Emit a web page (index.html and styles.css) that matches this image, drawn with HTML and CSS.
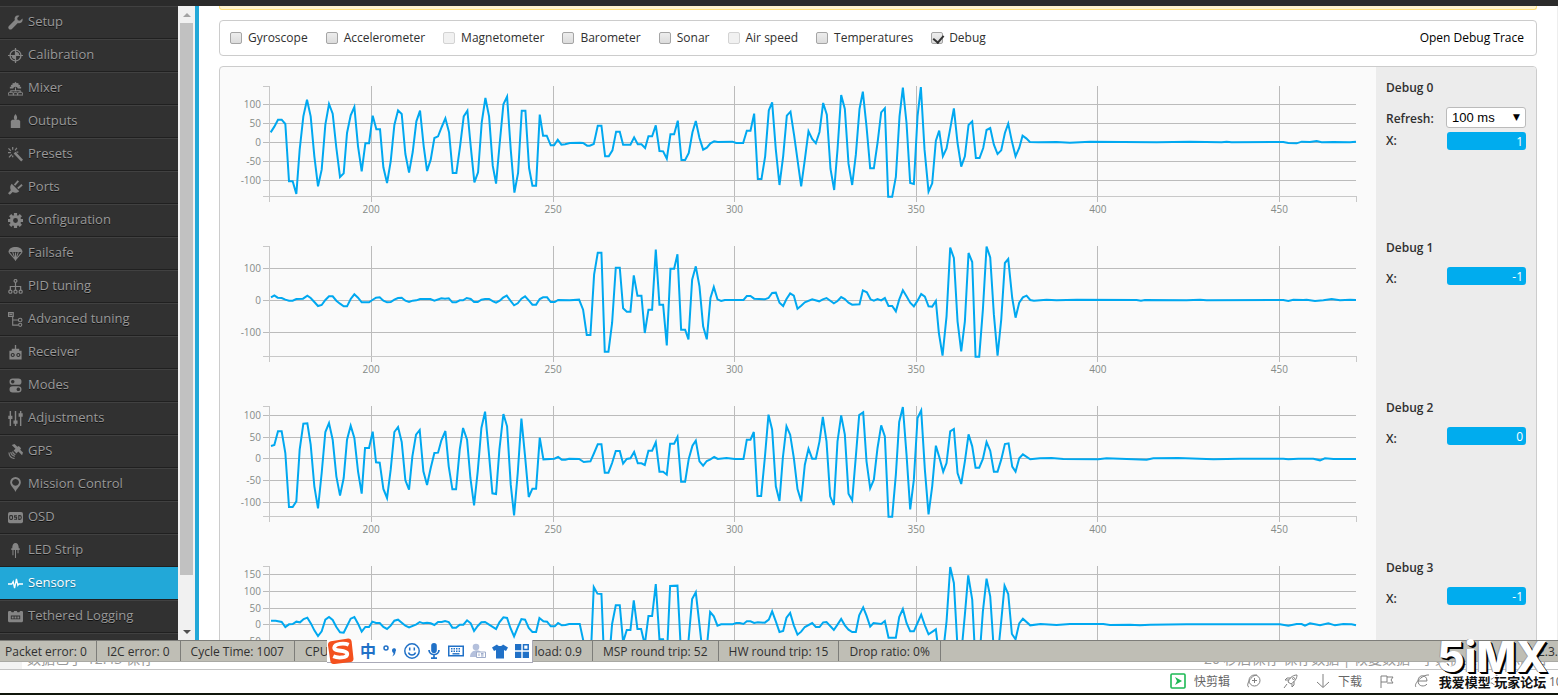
FILE: index.html
```html
<!DOCTYPE html>
<html lang="en">
<head>
<meta charset="utf-8">
<title>Configurator - Sensors</title>
<link rel="stylesheet" href="styles.css">
</head>
<body>
<svg class="sprite" aria-hidden="true">
  <symbol id="i-wrench" viewBox="0 0 16 16"><path d="M15.400 3.600 12.800 6l-2.400-.5L9.800 3.200 12.200.7C10.400.1 8.500.5 7.600 2c-.7 1.100-.7 2.200-.3 3.300L1 11.600c-1 1-.9 2.400 0 3.200.9.900 2.300.9 3.200 0l6.300-6.200c1.300.5 2.700.3 3.700-.6 1.300-1.200 1.700-2.900 1.200-4.400z"/></symbol>
  <symbol id="i-target" viewBox="0 0 16 16"><circle cx="8" cy="8" r="5.800" fill="none" stroke="currentColor" stroke-width="1.400"/><path d="M8 0v16M0 8h16" stroke="currentColor" stroke-width="1.300"/><path d="M8 8V4a4 4 0 0 1 4 4zM8 8v4a4 4 0 0 1-4-4z"/></symbol>
  <symbol id="i-mixer" viewBox="0 0 16 16"><path d="M2 6h1.500L3 4.300l1.700-.4.300-1.900 1.700.4L8 .8l1.300 1.600 1.700-.4.300 1.900 1.700.4L12.500 6H14v2h-3.500a2.600 2.600 0 0 0-5 0H2z"/><path d="M8 7v4M3 12.500V10.500h10v2" fill="none" stroke="currentColor" stroke-width="1.100"/><path d="M1 12h4l1 3H0zm5.500 0h3l1 3h-5zM11 12h4l1 3h-6z" fill="none" stroke="currentColor" stroke-width="1"/></symbol>
  <symbol id="i-output" viewBox="0 0 16 16"><path d="M8 0c1.500 2 1.800 3 1.700 4.500L9 6h2.500L13 7.500V15H3V7.500L4.500 6H7l-.7-1.500C6.200 3 6.500 2 8 0z"/></symbol>
  <symbol id="i-wand" viewBox="0 0 16 16"><path d="m6 7 2-2 8 8.500-2 2z"/><path d="M5 0v3M.5 1.500l2.500 2.500M9.500 1 7.500 3.500M0 6h3M1 11l3-3M9 5.500h2M5 9v2" stroke="currentColor" stroke-width="1.300"/></symbol>
  <symbol id="i-plug" viewBox="0 0 16 16"><path d="m4 4 8 8c-2.500 2-5 2-7 .8L2 15.800 0 14l3-3C2 8.500 2 6 4 4z"/><path d="m7 5.500 4-4.500M10.500 9 15 5" stroke="currentColor" stroke-width="2"/></symbol>
  <symbol id="i-gear" viewBox="0 0 16 16"><circle cx="8" cy="8" r="4.300" fill="none" stroke="currentColor" stroke-width="3.400"/><path d="M8 0v3M8 13v3M0 8h3M13 8h3M2.300 2.300l2 2M11.700 11.700l2 2M13.700 2.300l-2 2M4.300 11.700l-2 2" stroke="currentColor" stroke-width="3.400"/></symbol>
  <symbol id="i-chute" viewBox="0 0 16 16"><path d="M.5 6.500c0-3.500 3.500-5.500 7.500-5.500s7.500 2 7.500 5.500z"/><path d="M1 6.500 8 15l7-8.500M5 6.500 8 15l3-8.500M8 7v8" fill="none" stroke="currentColor" stroke-width="1.100"/></symbol>
  <symbol id="i-tree" viewBox="0 0 16 16"><g fill="none" stroke="currentColor" stroke-width="1.300"><circle cx="8" cy="2" r="1.500"/><path d="M8 3.500V12M2.500 12V8h11v4"/><circle cx="2.500" cy="13.500" r="1.700"/><circle cx="8" cy="13.500" r="1.700"/><circle cx="13.500" cy="13.500" r="1.700"/></g></symbol>
  <symbol id="i-branch" viewBox="0 0 16 16"><g fill="none" stroke="currentColor" stroke-width="1.200"><path d="M.6.600h5v4h-5zM1.500 2.500h3M5 5v9h6M5 8.500h6"/><circle cx="13" cy="8.500" r="1.900"/><circle cx="13" cy="13.700" r="1.700"/></g></symbol>
  <symbol id="i-radio" viewBox="0 0 16 16"><path fill-rule="evenodd" d="M7.300 0h1.400v4H12v2h2.500v9.500h-13V6H4V4h3.300zM5 8.500a2.200 2.200 0 1 0 .1 0zM11 8.500a2.200 2.200 0 1 0 .1 0z"/><circle cx="5" cy="10.700" r="1"/><circle cx="11" cy="10.700" r="1"/></symbol>
  <symbol id="i-modes" viewBox="0 0 16 16"><path fill-rule="evenodd" d="M5 .5h6a3.400 3.400 0 0 1 0 6.800H5A3.400 3.400 0 0 1 5 .500zM5 2a1.900 1.900 0 1 0 .1 0zM5 8.700h6a3.400 3.400 0 0 1 0 6.800H5a3.400 3.400 0 0 1 0-6.800zm6 1.500a1.900 1.900 0 1 0 .1 0z"/></symbol>
  <symbol id="i-sliders" viewBox="0 0 16 16"><path d="M2.500 0v16M8 0v16M13.500 0v16" stroke="currentColor" stroke-width="1.500"/><path d="M.3 5h4.400v3.500H.300zM5.800 10h4.400v3.500H5.800zM11.300 2.500h4.400V6h-4.400z"/></symbol>
  <symbol id="i-sat" viewBox="0 0 16 16"><path d="m4 1 3-1 3 3 1.500-1L14 4.500 13 6l3 3-1 3-4-4-2 2-3-3 2-2z"/><path d="M5 8a3 3 0 0 0 3 3M3 8.500A5 5 0 0 0 7.500 13M1 9a7 7 0 0 0 6 6.500" fill="none" stroke="currentColor" stroke-width="1.200"/></symbol>
  <symbol id="i-pin" viewBox="0 0 16 16"><path fill-rule="evenodd" d="M8 0a5.700 5.700 0 0 1 5.700 5.700C13.700 9.500 9.500 12 8 16 6.500 12 2.300 9.500 2.300 5.700A5.700 5.700 0 0 1 8 0zm0 2a3.700 3.700 0 1 0 .1 0z"/></symbol>
  <symbol id="i-osd" viewBox="0 0 16 16"><rect y="2" width="16" height="12" rx="2"/><g fill="none" stroke="#303030" stroke-width="1.100"><rect x="1.800" y="6" width="3" height="4" rx="1"/><path d="M9.500 6.200H7v1.600h2.200v2H6.500M11.500 6v4h1.200q1.500 0 1.500-2t-1.500-2z"/></g></symbol>
  <symbol id="i-led" viewBox="0 0 16 16"><path d="M4.500 5.500C4.500 2 6 0 8 0s3.500 2 3.500 5.500h1v2h-9v-2z"/><path d="M5.300 7v6M8 7v9M10.700 7v4" stroke="currentColor" stroke-width="1.100"/></symbol>
  <symbol id="i-pulse" viewBox="0 0 16 16"><path d="M0 8.500h4L5.500 6 7 13 9 3l1.500 7 1-1.500H16" fill="none" stroke="currentColor" stroke-width="1.400"/></symbol>
  <symbol id="i-log" viewBox="0 0 16 16"><path fill-rule="evenodd" d="M1 2h2l1 1.500h2L6.500 2h3l.5 1.500h2L13 2h2l1 1v10l-1 1H1l-1-1V3zm2 5v4h10V7z"/><path d="M4 8h2v2H4zm3 0h2v2H7zm3 0h2v2h-2z"/></symbol>
</svg>

<div class="titlebar"></div>
<div class="app">
  <nav class="sidebar">
    <ul class="menu">
      <li><a href="#setup"><svg><use href="#i-wrench"/></svg>Setup</a></li>
      <li><a href="#calibration"><svg><use href="#i-target"/></svg>Calibration</a></li>
      <li><a href="#mixer"><svg><use href="#i-mixer"/></svg>Mixer</a></li>
      <li><a href="#outputs"><svg><use href="#i-output"/></svg>Outputs</a></li>
      <li><a href="#presets"><svg><use href="#i-wand"/></svg>Presets</a></li>
      <li><a href="#ports"><svg><use href="#i-plug"/></svg>Ports</a></li>
      <li><a href="#configuration"><svg><use href="#i-gear"/></svg>Configuration</a></li>
      <li><a href="#failsafe"><svg><use href="#i-chute"/></svg>Failsafe</a></li>
      <li><a href="#pid"><svg><use href="#i-tree"/></svg>PID tuning</a></li>
      <li><a href="#advanced"><svg><use href="#i-branch"/></svg>Advanced tuning</a></li>
      <li><a href="#receiver"><svg><use href="#i-radio"/></svg>Receiver</a></li>
      <li><a href="#modes"><svg><use href="#i-modes"/></svg>Modes</a></li>
      <li><a href="#adjustments"><svg><use href="#i-sliders"/></svg>Adjustments</a></li>
      <li><a href="#gps"><svg><use href="#i-sat"/></svg>GPS</a></li>
      <li><a href="#mission"><svg><use href="#i-pin"/></svg>Mission Control</a></li>
      <li><a href="#osd"><svg><use href="#i-osd"/></svg>OSD</a></li>
      <li><a href="#led"><svg><use href="#i-led"/></svg>LED Strip</a></li>
      <li><a class="active" href="#sensors"><svg><use href="#i-pulse"/></svg>Sensors</a></li>
      <li><a href="#logging"><svg><use href="#i-log"/></svg>Tethered Logging</a></li>
      <li><a href="#more"></a></li>
    </ul>
    <div class="scrollbar">
      <span class="arrow up"></span>
      <span class="track"><span class="thumb"></span></span>
      <span class="arrow down"></span>
    </div>
  </nav>
  <main class="content">
    <div class="notice"></div>
    <div class="filters">
      <label><input type="checkbox">Gyroscope</label>
      <label><input type="checkbox">Accelerometer</label>
      <label><input type="checkbox" disabled>Magnetometer</label>
      <label><input type="checkbox">Barometer</label>
      <label><input type="checkbox">Sonar</label>
      <label><input type="checkbox" disabled>Air speed</label>
      <label><input type="checkbox">Temperatures</label>
      <label><input type="checkbox" checked>Debug</label>
      <a class="trace-link" href="#trace">Open Debug Trace</a>
    </div>
    <div class="panel">
      <section class="row">
        <div class="chart" data-series="0"></div>
        <div class="readout">
          <h2>Debug 0</h2>
          <div class="field refresh"><label for="rate">Refresh:</label>
            <span class="select"><select id="rate"><option>100 ms</option></select></span></div>
          <div class="field tight"><span>X:</span><output>1</output></div>
        </div>
      </section>
      <section class="row">
        <div class="chart" data-series="1"></div>
        <div class="readout"><h2>Debug 1</h2><div class="field"><span>X:</span><output>-1</output></div></div>
      </section>
      <section class="row">
        <div class="chart" data-series="2"></div>
        <div class="readout"><h2>Debug 2</h2><div class="field"><span>X:</span><output>0</output></div></div>
      </section>
      <section class="row">
        <div class="chart" data-series="3"></div>
        <div class="readout"><h2>Debug 3</h2><div class="field"><span>X:</span><output>-1</output></div></div>
      </section>
    </div>
  </main>
</div>

<footer class="status">
  <span>Packet error: 0</span>
  <span>I2C error: 0</span>
  <span>Cycle Time: 1007</span>
  <span class="cpu"><b>CPU</b><b>load: 0.9</b></span>
  <span>MSP round trip: 52</span>
  <span>HW round trip: 15</span>
  <span>Drop ratio: 0%</span>
  <span class="version">2.3.</span>
</footer>
<div class="underlay"><div class="saved">数据已于 12:43 保存</div><div class="actions">20 秒后保存 保存数据 | 恢复数据 &nbsp; 字数检查 | 清除内容</div></div>
<div class="tray">
  <svg class="t-play" viewBox="0 0 16 16"><rect x="1" y="1" width="14" height="14" rx="1" fill="#fff" stroke="#1db954" stroke-width="1.600"/><path d="M5 4l7 4-7 4 2-4z" fill="#1db954" stroke="none"/></svg>
  <span>快剪辑</span>
  <svg class="g1" viewBox="0 0 16 16"><circle cx="8.500" cy="7.500" r="5.500"/><path d="M8.500 5v5M6 7.500h5M3 14C-1 13 5 2 11 2"/></svg>
  <svg class="g2" viewBox="0 0 16 16"><path d="M14 2C9 2 6 6 5 9l3 2c3-2 6-5 6-9zM6 7H2l2-2h4M9 11v3l2-2V8M4 11l-3 4"/><circle cx="10.500" cy="5.500" r="1"/></svg>
  <svg class="g3" viewBox="0 0 16 16"><path d="M8 1v13M2 9l6 5.500L14 9"/></svg>
  <span class="dl">下载</span>
  <svg class="g4" viewBox="0 0 16 16"><path d="M2 15V3h6v6H2M8 4h6l-2 3 2 3H8"/></svg>
  <svg class="g5" viewBox="0 0 16 16"><path d="M4 8h9c0-7-9-7-9 0 0 6 7 6 9 3M2 14C-1 11 9 1 15 2"/></svg>
  <svg class="g6" viewBox="0 0 16 16"><path d="M2 6v4h3l5 4V2L5 6z"/></svg>
  <span class="zoom">10</span>
</div>
<div class="desk"></div>

<div class="ime">
  <svg class="sogou" viewBox="0 0 28 28"><path d="M4 4 22 1q3 0 3.500 3l2 18q0 3-3 3.500L8 27.500q-4 0-4.500-3L1 8q0-3.500 3-4z" fill="#f4511e"/><path d="M22.500 7.500C18 5.500 8 6 7.500 10.500 7.200 15 21 12.500 21 17c0 4.500-10 4.500-14.500 2.500" fill="none" stroke="#fff" stroke-width="4"/></svg>
  <span class="zh">中</span>
  <svg viewBox="0 0 16 16"><circle cx="4" cy="5" r="2" fill="none" stroke="#2171c7" stroke-width="1.500"/><path d="M10 7a2 2 0 1 1 3.500 1.500C13.500 11 12 13 10 13.500c1-1 1.500-2 1.500-3.500C10.500 9.500 10 8.500 10 7z" fill="#2171c7"/></svg>
  <svg viewBox="0 0 16 16" fill="none" stroke="#2171c7" stroke-width="1.500"><circle cx="8" cy="8" r="7.200"/><path d="M5.700 4.500v3M10.300 4.500v3M4.500 9.500c1 3.200 6 3.200 7 0"/></svg>
  <svg viewBox="0 0 16 16"><rect x="5.200" y="0" width="5.600" height="10" rx="2.800" fill="#2171c7"/><path d="M3 7c0 6 10 6 10 0M8 12v3.500M5 15.200h6" fill="none" stroke="#2171c7" stroke-width="1.700"/></svg>
  <svg viewBox="0 0 16 16"><path fill-rule="evenodd" fill="#2171c7" d="M0 2.500h16v11H0zm1.500 1.500v8h13V4z"/><path d="M3 5.800h10M3 8.200h10" stroke="#2171c7" stroke-width="1.600" stroke-dasharray="1.500 1"/><path d="M4.500 10.800h7" stroke="#2171c7" stroke-width="1.400"/></svg>
  <svg viewBox="0 0 16 16"><circle cx="6" cy="4" r="3.300" fill="#b4c0dc"/><path d="M0 14c0-8 11-8 11-4v4z" fill="#b4c0dc"/><path d="M6.500 9h9v5.500h-9zM9 10.500v2.500M11 10.500h2.500M11 11.800h2.500M11 13h2.500" fill="#fff" stroke="#9eaccb"/></svg>
  <svg viewBox="0 0 16 16"><path d="M5 1.500c1.500 2 4.500 2 6 0l5 3-2 3.500-2-1v8.500H4V7L2 8 0 4.500z" fill="#2171c7"/></svg>
  <svg viewBox="0 0 16 16"><path d="M1 1h6.300v6.300H1zM1 8.700h6.300V15H1zM8.700 8.700H15V15H8.700z" fill="#2171c7"/><path d="M9.500 1.800h4.700v4.700H9.500z" fill="none" stroke="#2171c7" stroke-width="1.500"/></svg>
</div>
<div class="mark"><strong>5iMX</strong><em>我爱模型 玩家论坛</em></div>
<script src="charts.js"></script>
</body>
</html>
```
FILE: styles.css
```css
* { box-sizing: border-box; }
body {
  margin: 0;
  height: 100vh;
  display: flex;
  flex-direction: column;
  overflow: hidden;
  position: relative;
  background: #fff;
  color: #303030;
  font-family: "Open Sans", "Noto Sans CJK SC", sans-serif;
  font-size: 12px;
}
.sprite { position: absolute; width: 0; height: 0; }
.titlebar { flex: none; height: 6px; background: #2b2b2b; }
.app { flex: 1; min-height: 0; display: flex; overflow: hidden; }

/* sidebar */
.sidebar { flex: none; display: flex; border-right: 4px solid #22a8d8; overflow: hidden; }
.menu { width: 178px; margin: 0; padding: 0; list-style: none; background: #2f2f2f; overflow: hidden; font-size: 13px; }
.menu a {
  display: flex;
  align-items: center;
  gap: 5px;
  height: 33px;
  padding: 0 8px 4px;
  border-top: 1px solid #414141;
  border-bottom: 1px solid #202020;
  background: #313131;
  color: #999;
  text-decoration: none;
  text-shadow: 0 1px 0 #111;
}
.menu svg { width: 15px; height: 15px; margin-top: 3px; fill: currentColor; color: #858585; }
.menu a.active { background: #22a8d8; border-top-color: #22a8d8; color: #fff; text-shadow: 0 1px 1px #1a6e8e; }
.menu .active svg { color: #fff; }
.scrollbar { width: 17px; display: flex; flex-direction: column; background: #f1f1f1; }
.arrow { height: 17px; display: flex; align-items: center; justify-content: center; }
.arrow::before { content: ""; border: 4px solid transparent; }
.up::before { border-top: 0; border-bottom-color: #a3a3a3; }
.down::before { border-bottom: 0; border-top-color: #505050; }
.track { flex: 1; padding: 0 2px; }
.thumb { display: block; height: 92%; background: #c1c1c1; }

/* content */
.content { flex: 1; min-width: 0; padding: 0 20px; border-right: 1px solid #eee; overflow: hidden; }
.notice { height: 4px; background: #fff3cf; border: 1px solid #ffe07a; border-top: 0; border-radius: 0 0 3px 3px; }
.filters {
  display: flex;
  align-items: center;
  gap: 18px;
  height: 36px;
  margin-top: 10px;
  padding: 0 12px 2px 10px;
  border: 1px solid #ccc;
  border-radius: 4px;
}
.filters label { display: flex; align-items: center; gap: 6px; }
.filters input {
  appearance: none;
  width: 12px;
  height: 12px;
  margin: 2px 0 0;
  border: 1px solid #a5a5a5;
  border-radius: 2px;
  background: linear-gradient(#ededed, #dcdcdc);
}
.filters input:disabled { border-color: #d3d3d3; background: #f1f1f1; }
.filters input:checked::after {
  content: "";
  display: block;
  width: 5px;
  height: 8px;
  margin: 0 0 0 3px;
  border: solid #333;
  border-width: 0 2px 2px 0;
  transform: rotate(40deg);
}
.trace-link { margin-left: auto; color: #000; text-decoration: none; }
.panel { margin-top: 10px; border: 1px solid #ccc; border-radius: 4px; background: #fafafa; overflow: hidden; }
.row { display: flex; height: 160px; }
.chart { flex: 1; min-width: 0; display: grid; grid-template-columns: 49px 1fr; grid-template-rows: 110px 1fr; padding: 19px 20px 0 0; }
.chart svg { display: block; width: 100%; height: 110px; overflow: visible; }
.chart .x-labels { grid-column: 2; height: 20px; }
.chart text { font-size: 10px; fill: #858a87; }
.grid { fill: none; stroke: #bbb; stroke-width: 1; vector-effect: non-scaling-stroke; shape-rendering: crispEdges; }
.axis { stroke: #c8c8c8; }
.trace { fill: none; stroke: #00a8f0; stroke-width: 2; vector-effect: non-scaling-stroke; }
.readout { width: 160px; padding: 12px 10px 0; background: #ececec; }
.readout h2 { margin: 0 0 10px; font-size: 12px; font-weight: 600; line-height: 18px; }
.readout .field { display: flex; justify-content: space-between; align-items: flex-start; font-size: 12px; font-weight: 600; line-height: 24px; }
.readout output { width: 79px; height: 18px; padding-right: 3px; border-radius: 3px; background: #00acee; color: #fff; text-align: right; line-height: 19px; font-weight: 400; }
.readout .tight { padding-top: 1px; line-height: 18px; }
.select { position: relative; display: block; height: 24px; }
.select::after { content: "▼"; position: absolute; right: 6px; top: 0; font: 9px/20px "DejaVu Sans", sans-serif; color: #000; }
.select select { appearance: none; display: block; width: 80px; height: 21px; padding: 0 5px; border: 1px solid #bbb; border-radius: 3px; background: #fff; color: #000; font: 13px "Liberation Sans", sans-serif; }

/* status bar */
.status { flex: none; display: flex; height: 22px; background: #bfbeb5; border-top: 1px solid #7d7d79; border-bottom: 1px solid #a9a9a4; line-height: 21px; white-space: nowrap; overflow: hidden; }
.status span { padding: 0 10px; border-right: 1px solid #7d7d79; }
.status span:first-child { padding: 0 9px 0 5px; }
.status b { font-weight: 400; }
.status .cpu { width: 298px; display: flex; justify-content: space-between; }
.status .version { margin-left: auto; padding: 0; border: 0; }

/* strip behind the status bar */
.underlay { flex: none; height: 8px; display: flex; justify-content: space-between; align-items: flex-end; overflow: hidden; padding: 0 10px 0 22px; border-bottom: 1px solid #c4c4c4; background: linear-gradient(90deg, #f3f3f3 22px, #fff 22px); color: #999; font-size: 14px; line-height: 20px; }
.saved { padding-left: 5px; }
.tray { flex: none; height: 23px; display: flex; align-items: center; justify-content: flex-end; padding-bottom: 1px; color: #666; background: #fff; overflow: hidden; }
.tray svg { flex: none; width: 16px; height: 16px; fill: none; stroke: #808080; }
.tray .t-play { margin-right: 8px; }
.tray .g1 { margin-left: 16px; }
.tray .g2 { margin-left: 21px; }
.tray .g3 { margin-left: 16px; }
.tray .dl { margin-left: 7px; }
.tray .g4 { margin-left: 17px; }
.tray .g5 { margin-left: 19px; }
.tray .g6 { margin: 0 46px 0 57px; }
.tray .zoom { width: 9px; }
.desk { flex: none; height: 2px; background: #10160c; }

/* floating input-method bar and logo */
.ime { position: absolute; left: 327px; bottom: 32px; display: flex; align-items: center; gap: 6px; width: 206px; height: 23px; padding-right: 5px; background: #fff; border: solid #aaaab8; border-width: 0 1px 1px 0; }
.ime svg { flex: none; width: 16px; height: 16px; }
.ime .sogou { width: 27px; height: 28px; }
.ime .zh { width: 16px; color: #2171c7; font-size: 16px; font-weight: 700; line-height: 22px; }
.mark { position: absolute; right: 10px; bottom: 5px; display: flex; flex-direction: column; align-items: center; white-space: nowrap; }
.mark strong { color: #fff; font: 800 42px/34px Inter, sans-serif; text-shadow: 1px 1px 0 #000, 2px 2px 0 #000, -1px 0 0 #999; }
.mark em { font-style: normal; font-size: 13px; font-weight: 700; line-height: 16px; color: #111; text-shadow: 1px 1px 0 #fff, -1px -1px 0 #fff, 1px -1px 0 #fff, -1px 1px 0 #fff; }
```
FILE: charts.js
```js
// Traces are stored at three units per pixel of the 110px-high plot.
// Each part of a trace carries the offset that places it in the plot.
const WIDTH = 3260, HEIGHT = 330;
const TICKS_X = [[200, 306], [250, 852], [300, 1396], [350, 1941], [400, 2486], [450, 3030]];
const SERIES = [
  { ticks: [[100, 55], [50, 112], [0, 169], [-50, 225], [-100, 282]], parts: [
    [-178, -259, "183,398 194,381 205,360 216,360 227,373 238,545 249,545 260,583 270,450 281,350 292,300 303,350 314,470 325,560 336,510 347,375 358,313 369,342 380,445 391,532 402,521 412,400 423,347 434,322 445,440 456,515 467,431 478,431 489,348 500,389 511,389 521,503 532,550 543,485 554,376 565,332 576,343 587,463 598,519 609,457 620,365 631,333 642,440 652,514 663,480 674,415 685,410 696,382 707,356 718,398 729,520 740,520 751,440 762,350 773,333 783,440 794,548 805,518 816,368 827,295 838,350 849,498 859,552 870,430 881,314 892,291 903,450 914,579 925,520 936,333 947,333 958,505 968,558 979,558 990,345 1000,408 1011,408 1023,437 1033,437 1044,420 1055,435 1066,434 1080,430 1110,429 1120,430 1132,438"],
    [962, -259, "0,438 12,433 24,378 35,378 46,470 57,470 68,452 79,396 90,396 100,435 122,435 133,413 144,434 155,434 166,445 176,410 187,410 198,377 209,454 220,455 231,477 242,404 253,404 264,363 275,481 286,481 297,460 308,398 318,364 329,415 340,450 351,444 362,431 373,425 384,427 428,426 439,430 460,430 471,393 482,393 493,342 504,538 515,538 526,470 537,332 547,308 558,450 569,556 580,470 591,348 602,336 613,408 634,560 645,480 656,395 667,418 678,431 689,397 700,310 711,345 722,508 733,571 743,450 754,286 765,328 776,492 787,556 798,465 809,328 819,276 830,380 841,506 852,506 863,430 874,338 885,326 895,591 907,591 918,532 929,350 939,264 950,370 961,550 972,553 983,350 993,262 1004,450 1016,576 1027,551 1038,423 1048,393 1059,470 1070,446 1081,387 1092,326 1103,430 1114,501 1125,470 1136,376 1147,365 1158,475 1169,475 1180,445 1190,391 1201,385 1212,435 1223,463 1234,452 1245,400 1255,372 1266,425 1277,470 1288,445 1298,408 1309,416 1320,427 1345,428 1400,427 1440,429 1500,426 1700,428 1800,426 1895,428 1910,426 1925,428 2080,427 2095,430 2120,431 2135,426 2160,427 2180,424 2195,428 2230,427 2280,428 2298,426"]] },
  { ticks: [[100, 67], [0, 163], [-100, 258]], parts: [
    [-118, -49, "124,203 134,197 144,204 156,205 167,210 178,213 189,213 200,208 220,207 233,198 243,205 254,217 265,229 276,226 287,211 298,200 309,200 320,213 331,222 342,230 352,230 363,208 374,194 385,204 396,218 418,218 428,211 439,204 450,203 461,213 472,218 483,217 494,210 505,205 516,204 527,213 538,217 549,213 560,212 571,208 602,208 614,213 635,206 646,207 657,206 668,218 679,218 690,212 700,212 711,205 723,208 733,217 744,217 755,210 766,208 778,208 790,215 799,219 810,213 820,204 831,198 842,213 853,227 864,221 875,207 886,200 897,212 908,225 919,225 930,208 940,203 952,203 963,217 975,217 985,211 1020,212 1048,210 1060,240 1071,316 1082,316 1093,135 1104,69 1115,69 1125,366 1136,366 1147,280 1158,114 1170,114 1180,236 1191,246 1202,246 1212,137 1223,198 1235,198 1245,310 1256,240 1267,240 1278,60 1289,225 1300,225 1311,347 1322,117 1333,117 1343,74 1354,300 1366,300 1376,329 1387,150 1398,110 1409,170 1420,290 1431,329 1442,205 1452,172 1463,209 1474,214 1485,211"],
    [1352, -49, "71,211 81,199 92,199 103,207 135,209 146,205 157,190 168,189 179,219 190,229 200,208 211,191 222,198 233,237 244,228 255,218 277,209 298,215 309,209 320,205 342,221 353,214 364,202 375,208 386,219 397,225 419,224 429,182 441,188 452,209 462,213 473,208 484,212 495,205 506,229 517,229 528,245 538,210 549,182 560,200 571,219 582,230 593,213 604,193 615,201 626,230 637,231 648,214 657,310 668,378 680,260 691,54 702,85 713,275 724,365 735,275 746,70 757,97 767,381 778,381 789,240 800,51 811,83 822,255 833,378 844,270 855,100 865,88 877,205 887,264 898,219 909,203 920,198 931,211 942,213 980,210 1010,212 1070,210 1250,211 1263,213 1275,211 1400,212 1440,210 1460,212 1690,211 1705,214 1720,210 1750,211 1760,210 1785,214 1810,212 1835,208 1860,212 1890,210 1908,211"]] },
  { ticks: [[100, 27], [50, 93], [0, 157], [-50, 222], [-100, 288]], parts: [
    [-118, -49, "124,169 134,166 145,125 156,125 167,190 178,352 189,352 200,335 210,180 221,102 233,101 243,165 254,290 265,356 276,250 287,127 298,100 309,150 320,260 331,318 342,265 352,150 363,108 374,145 385,245 396,312 406,175 418,175 429,126 439,218 450,219 461,298 472,325 483,240 494,127 505,112 516,157 527,272 538,300 548,200 559,135 570,121 581,245 592,286 603,235 614,190 625,189 635,152 647,124 657,230 668,299 679,299 690,180 700,115 712,150 722,265 733,347 744,245 755,115 766,66 777,185 788,311 799,313 809,180 821,73 832,110 843,285 853,377 864,250 875,87 886,200 897,322 908,297 919,297 930,144 941,209 974,207 985,202 996,210 1007,210 1018,207 1048,208 1062,217 1082,215 1093,190 1104,164 1115,164 1125,249 1136,249 1147,220 1158,184 1170,184 1180,222 1191,208 1202,206 1213,187 1224,221 1235,221 1245,226 1256,183 1267,183 1278,158 1289,246 1300,246 1311,255 1321,162 1333,162 1343,142 1354,276 1366,276 1377,207 1388,168 1398,153 1409,215 1420,228 1431,214 1442,209 1453,202 1464,208 1490,205 1515,208"],
    [1352, -49, "71,208 81,150 92,150 102,127 113,319 124,319 135,205 146,75 157,120 168,290 179,334 189,205 200,110 211,135 222,205 233,298 244,335 255,225 266,177 277,207 288,207 299,155 309,82 320,155 331,320 342,346 353,155 364,77 375,135 386,312 397,332 408,200 418,76 430,68 440,215 451,296 462,270 473,175 484,107 495,140 506,381 517,381 528,255 538,97 549,52 560,195 571,359 582,270 593,85 604,62 615,240 626,374 637,290 648,168 659,205 670,246 680,220 691,125 702,118 713,250 724,283 735,215 746,134 757,170 767,234 778,234 789,208 800,157 811,183 822,246 833,246 844,210 855,163 866,161 877,231 887,246 898,206 909,194 931,209 960,206 995,205 1030,208 1135,209 1160,206 1280,210 1300,206 1375,205 1480,209 1560,207 1690,207 1705,209 1735,207 1780,207 1800,212 1815,206 1840,208 1908,208"]] },
  { ticks: [[150, 24], [100, 75], [50, 126], [0, 175], [-50, 226], [-100, 277]], parts: [
    [-118, -34, "124,198 138,198 156,202 167,217 178,209 189,208 200,201 211,203 222,193 233,189 244,207 254,227 265,244 276,230 287,195 298,187 309,196 320,217 331,233 342,234 352,214 363,192 374,187 385,207 396,231 407,217 418,217 428,201 439,205 450,205 461,217 472,223 483,213 494,198 505,195 527,213 538,218 560,209 570,202 581,206 592,204 603,206 614,211 625,202 636,202 646,199 657,202 668,219 679,219 690,210 701,210 712,197 723,206 733,229 744,214 755,203 766,202 777,209 799,223 809,203 821,188 832,190 842,220 853,245 864,218 875,193 886,195 897,220 908,232 919,232 929,190 941,200 952,201 963,215 975,215 985,205 996,212 1007,211 1018,208 1050,208 1060,255 1070,330 1082,330 1092,97 1103,117 1115,118 1124,340 1136,340 1147,208 1158,152 1170,152 1180,262 1191,226 1202,226 1212,137 1223,223 1234,223 1245,270 1256,184 1267,184 1278,88 1289,254 1300,254 1311,310 1321,94 1343,93 1354,300 1366,310 1376,260 1387,133 1398,113 1409,210 1420,310 1431,280 1441,172 1452,185 1463,213 1474,209 1508,209 1519,205 1530,205"],
    [1352, -34, "71,208 81,200 92,200 103,205 114,203 135,204 147,195 157,170 168,200 179,232 190,229 200,189 211,175 222,212 233,240 244,231 255,217 277,205 288,217 299,217 310,203 320,202 342,226 353,210 364,193 375,212 386,225 397,232 408,232 418,182 430,158 440,183 451,216 461,205 484,208 495,199 506,249 528,249 538,187 549,163 560,205 571,230 582,230 593,205 604,180 615,212 626,239 648,224 657,300 669,300 680,200 691,37 702,85 713,280 724,300 735,180 745,62 757,135 767,330 778,320 789,170 800,72 811,125 822,290 833,310 844,200 854,93 865,118 876,238 887,254 898,206 909,192 931,212 962,208 1010,211 1050,208 1150,208 1170,211 1230,210 1260,212 1290,210 1400,209 1680,209 1705,213 1730,208 1745,208 1755,213 1770,206 1785,209 1800,212 1825,206 1845,212 1870,208 1895,209 1908,212"]] }
];

function tracePath(parts) {
  return parts.map(([dx, dy, points]) => points.split(" ").map(p => {
    const [x, y] = p.split(",").map(Number);
    return (x + dx) + "," + (y + dy);
  }).join(" ")).join(" ");
}

document.querySelectorAll(".chart").forEach(el => {
  const { ticks, parts } = SERIES[el.dataset.series];
  const yLabels = ticks.map(([v, y]) =>
    `<text x="41" y="${Math.round(y / 3) + 4}" text-anchor="end">${v}</text>`).join("");
  const xLabels = TICKS_X.map(([v, x]) =>
    `<text x="${x / WIDTH * 100}%" y="17" text-anchor="middle">${v}</text>`).join("");
  const rows = ticks.map(([, y]) => `M-18,${y}H${WIDTH}`).join("");
  const cols = TICKS_X.map(([, x]) => `M${x},0V${HEIGHT + 18}`).join("");
  el.innerHTML = `
    <svg>${yLabels}</svg>
    <svg viewBox="0 0 ${WIDTH} ${HEIGHT}" preserveAspectRatio="none">
      <path class="grid" d="${rows}${cols}"/>
      <path class="grid axis" d="M-18,0H0V${HEIGHT + 18}M-18,${HEIGHT}H${WIDTH}V${HEIGHT + 18}"/>
      <polyline class="trace" points="${tracePath(parts)}"/>
    </svg>
    <svg class="x-labels">${xLabels}</svg>`;
});
```
